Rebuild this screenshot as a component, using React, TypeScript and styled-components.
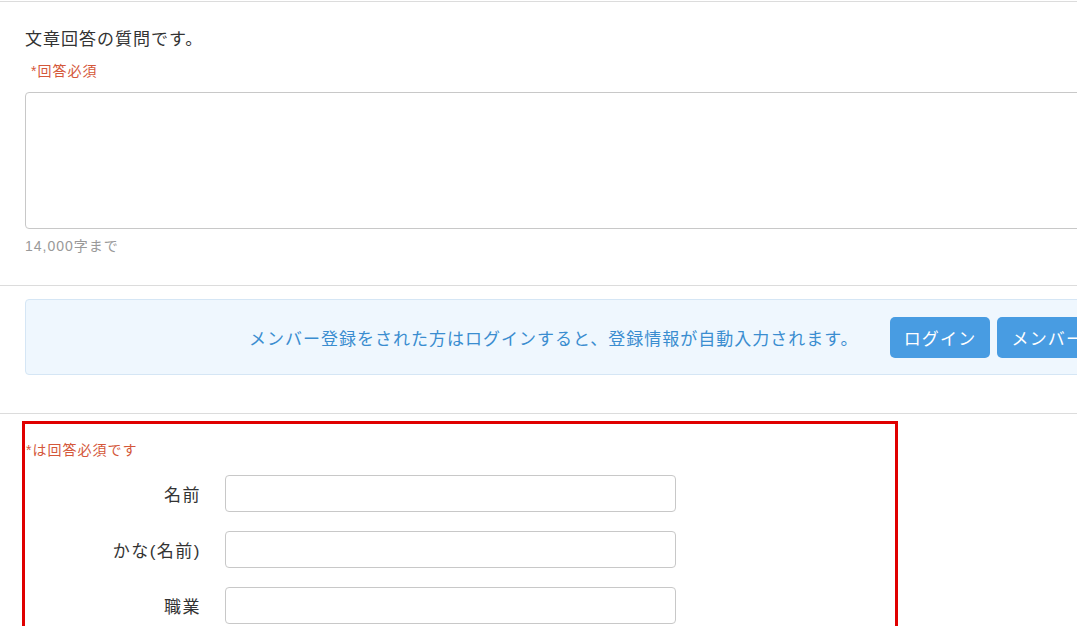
import React from "react";
import styled, { createGlobalStyle } from "styled-components";

const Global = createGlobalStyle`
  html, body { margin: 0; padding: 0; overflow: hidden; background: #fff; }
  body { font-family: "Liberation Sans", "Noto Sans CJK JP", sans-serif; color: #333; }
`;

const Page = styled.div`
  width: 1200px;
  padding-top: 1px;
`;

const Section = styled.section<{ $pt: number; $pb: number; $pl?: number }>`
  border-top: 1px solid #dcdcdc;
  padding: ${(p) => p.$pt}px 0 ${(p) => p.$pb}px ${(p) => p.$pl ?? 25}px;
`;

const QuestionTitle = styled.div`
  font-size: 17px;
  line-height: 24px;
  letter-spacing: 1px;
  color: #333;
`;

const Required = styled.div<{ $indent?: number; $mt?: number }>`
  font-size: 14px;
  line-height: 20px;
  letter-spacing: 1px;
  color: #d4573a;
  margin-left: ${(p) => p.$indent ?? 0}px;
  margin-top: ${(p) => p.$mt ?? 0}px;
`;

const TextArea = styled.textarea`
  display: block;
  box-sizing: border-box;
  width: 1150px;
  height: 137px;
  margin-top: 11px;
  border: 1px solid #c8c8c8;
  border-radius: 4px;
  resize: none;
  outline: none;
`;

const Counter = styled.div`
  font-size: 14px;
  line-height: 20px;
  letter-spacing: 1px;
  color: #999;
  margin-top: 7px;
`;

const Notice = styled.div`
  box-sizing: border-box;
  width: 1150px;
  height: 76px;
  display: flex;
  align-items: center;
  padding-left: 223px;
  background: #eff7fe;
  border: 1px solid #d5e6f5;
  border-radius: 4px;
`;

const NoticeText = styled.span`
  font-size: 17px;
  letter-spacing: 1px;
  color: #3a8dd0;
  margin-right: 31px;
  white-space: nowrap;
`;

const Button = styled.button`
  box-sizing: border-box;
  height: 41px;
  padding: 0 14px;
  margin-right: 7px;
  border: none;
  border-radius: 5px;
  background: #489ce2;
  color: #fff;
  font-family: inherit;
  font-size: 17px;
  letter-spacing: 1.2px;
  white-space: nowrap;
`;

const FormBox = styled.div`
  box-sizing: border-box;
  width: 876px;
  margin: 7px 0 0 22px;
  border: 3px solid #e00000;
  border-bottom: none;
  padding: 16px 0 40px 1px;
`;

const Row = styled.div`
  display: flex;
  align-items: center;
  margin-top: 19px;
  &:first-of-type { margin-top: 15px; }
`;

const Label = styled.label`
  width: 175px;
  text-align: right;
  font-size: 17px;
  letter-spacing: 1.5px;
  color: #333;
  margin-right: 24px;
`;

const Input = styled.input`
  box-sizing: border-box;
  width: 451px;
  height: 37px;
  border: 1px solid #c8c8c8;
  border-radius: 4px;
  outline: none;
`;

const Rows = styled.div``;

export default function App() {
  const fields = ["名前", "かな(名前)", "職業"];
  return (
    <Page>
      <Global />
      <Section $pt={26} $pb={29}>
        <QuestionTitle>文章回答の質問です。</QuestionTitle>
        <Required $indent={6} $mt={9}>*回答必須</Required>
        <TextArea />
        <Counter>14,000字まで</Counter>
      </Section>
      <Section $pt={13} $pb={38}>
        <Notice>
          <NoticeText>メンバー登録をされた方はログインすると、登録情報が自動入力されます。</NoticeText>
          <Button>ログイン</Button>
          <Button>メンバー登録</Button>
        </Notice>
      </Section>
      <Section $pt={0} $pb={0} $pl={0}>
        <FormBox>
          <Required>*は回答必須です</Required>
          <Rows>
            {fields.map((f) => (
              <Row key={f}>
                <Label>{f}</Label>
                <Input />
              </Row>
            ))}
          </Rows>
        </FormBox>
      </Section>
    </Page>
  );
}
